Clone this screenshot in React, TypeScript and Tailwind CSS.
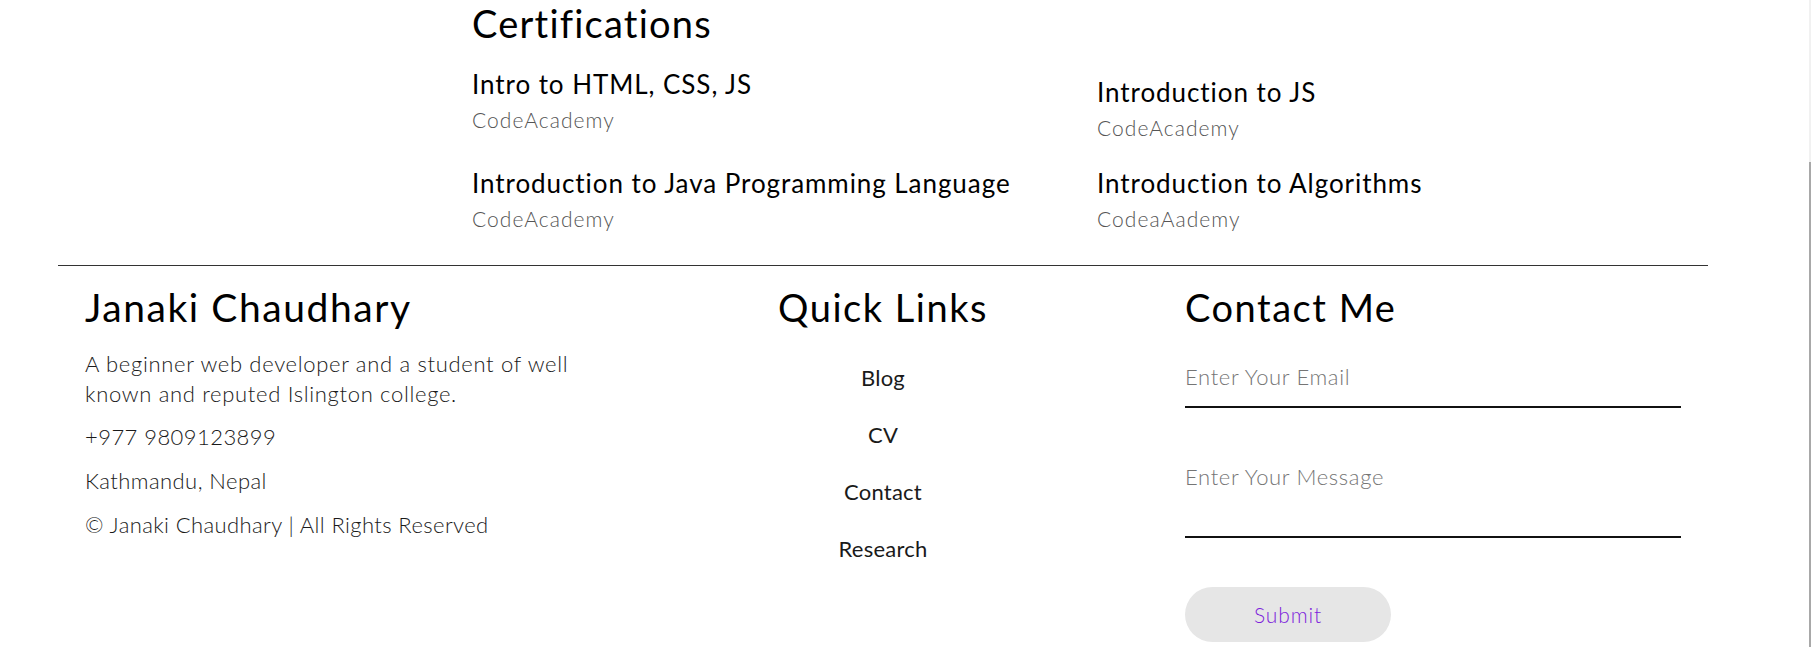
const CERTS = [
  { title: "Intro to HTML, CSS, JS", org: "CodeAcademy", nudge: false },
  { title: "Introduction to JS", org: "CodeAcademy", nudge: true },
  { title: "Introduction to Java Programming Language", org: "CodeAcademy", nudge: false },
  { title: "Introduction to Algorithms", org: "CodeaAademy", nudge: false },
];

const LINKS = ["Blog", "CV", "Contact", "Research"];

export default function App() {
  return (
    <div className="relative h-[647px] w-full overflow-hidden bg-white font-['Lato','Liberation_Sans',sans-serif] text-black">
      {/* Certifications */}
      <section className="pl-[472px]">
        <h2 className="text-[38px] leading-[46px] font-normal tracking-[0.032em]">Certifications</h2>
        <div className="mt-[22px] grid grid-cols-[625px_1fr] gap-y-[27px]">
          {CERTS.map((c) => (
            <div className={c.nudge ? "pt-2" : ""} key={c.title}>
              <h4 className="text-[26px] leading-[32px] font-normal tracking-[0.036em]">{c.title}</h4>
              <p className="mt-2 text-[21px] leading-[24px] font-light tracking-[0.05em] text-[#555]">{c.org}</p>
            </div>
          ))}
        </div>
      </section>

      <hr className="mx-[58px] mt-[34px] w-[1650px] border-0 border-t border-[#333]" />

      {/* Footer */}
      <footer className="flex pl-[85px] pt-[18px]">
        <div className="w-[648px]">
          <h3 className="text-[39px] leading-[46px] font-normal tracking-[0.04em]">Janaki Chaudhary</h3>
          <p className="mt-[19px] w-[505px] text-[22px] leading-[30px] font-light tracking-[0.031em] text-[#1a1a1a]">
            A beginner web developer and a student of well known and reputed Islington college.
          </p>
          <p className="mt-[13px] text-[22px] leading-[30px] font-light tracking-[0.02em] text-[#1a1a1a]">+977 9809123899</p>
          <p className="mt-[14px] text-[22px] leading-[30px] font-light tracking-[0.02em] text-[#1a1a1a]">Kathmandu, Nepal</p>
          <p className="mt-[14px] text-[22px] leading-[30px] font-light tracking-[0.018em] text-[#1a1a1a]">
            © Janaki Chaudhary | All Rights Reserved
          </p>
        </div>

        <div className="w-[300px] text-center">
          <h3 className="text-[38px] leading-[46px] font-normal tracking-[0.04em]">Quick Links</h3>
          <ul className="mt-[33px] flex flex-col gap-[27px]">
            {LINKS.map((l) => (
              <li key={l}>
                <a className="text-[22px] leading-[30px] text-[#1a1a1a] tracking-[0.01em]" href="#">
                  {l}
                </a>
              </li>
            ))}
          </ul>
        </div>

        <div className="ml-[152px] w-[496px]">
          <h3 className="text-[38px] leading-[46px] font-normal tracking-[0.04em]">Contact Me</h3>
          <form className="flex flex-col">
            <input
              className="mt-[34px] block h-[44px] w-full border-0 border-b-2 border-[#111] bg-transparent pt-0 pb-[18px] text-[22px] leading-[24px] font-light tracking-[0.03em] outline-none placeholder:text-[#757575]"
              placeholder="Enter Your Email"
              type="email"
            />
            <textarea
              className="mt-[56px] block h-[74px] w-full resize-none border-0 border-b-2 border-[#111] bg-transparent p-0 text-[22px] leading-[25px] font-light tracking-[0.03em] outline-none placeholder:text-[#757575]"
              placeholder="Enter Your Message"
            />
            <button
              className="mt-[49px] h-[55px] w-[206px] rounded-full bg-[#e6e6e6] text-[21px] font-light tracking-[0.04em] text-[#7e1fdc]"
              type="button"
            >
              Submit
            </button>
          </form>
        </div>
      </footer>

      {/* overlay scrollbar */}
      <div className="absolute top-0 right-0 flex h-full w-[2px] flex-col">
        <div className="h-[162px] bg-[#f1f1f1]" />
        <div className="flex-1 bg-[#a8a8a8]" />
      </div>
    </div>
  );
}
